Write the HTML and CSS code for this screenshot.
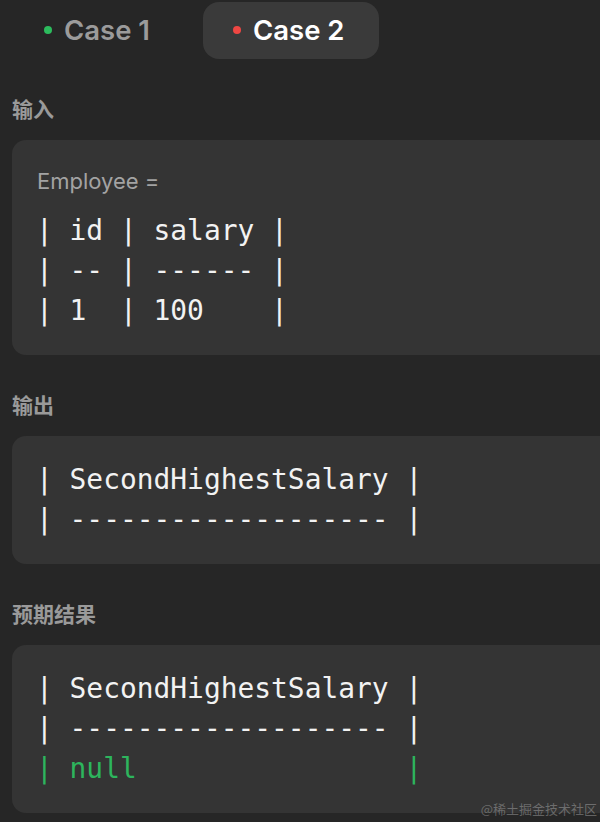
FILE: index.html
```html
<!DOCTYPE html>
<html lang="zh">
<head>
<meta charset="utf-8">
<link rel="stylesheet" href="styles.css">
</head>
<body>
<div class="page">
  <div class="tabs">
    <div class="tab"><span class="dot dot-green"></span><span class="tab-text">Case 1</span></div>
    <div class="tab tab-active"><span class="dot dot-red"></span><span class="tab-text">Case 2</span></div>
  </div>

  <div class="label">输入</div>
  <div class="box">
    <div class="var">Employee =</div>
    <pre class="code">| id | salary |
| -- | ------ |
| 1  | 100    |</pre>
  </div>

  <div class="label">输出</div>
  <div class="box">
    <pre class="code">| SecondHighestSalary |
| ------------------- |</pre>
  </div>

  <div class="label">预期结果</div>
  <div class="box">
    <pre class="code">| SecondHighestSalary |
| ------------------- |
<span class="green">| null                |</span></pre>
  </div>
</div>
<div class="watermark">@稀土掘金技术社区</div>
</body>
</html>
```

FILE: styles.css
```css
html, body {
  margin: 0;
  padding: 0;
  overflow: hidden;
  background: #262626;
  height: 822px;
}
body {
  position: relative;
  font-family: Inter, "Noto Sans", "Noto Sans CJK SC", sans-serif;
}
.page {
  width: 720px;
  padding-left: 12px;
  padding-top: 2px;
}
.tabs {
  display: flex;
  gap: 17px;
  height: 57px;
}
.tab {
  display: flex;
  align-items: center;
  gap: 12px;
  padding: 0 34px 1px 32px;
  border-radius: 16px;
  color: #9b9b9b;
  font-size: 27.5px;
  font-weight: 600;
  width: 176px;
  box-sizing: border-box;
}
.tab:first-child {
  width: 174px;
}
.tab-active {
  background: #3a3a3a;
  color: #ffffff;
  padding-left: 30px;
}
.dot {
  width: 8px;
  height: 8px;
  border-radius: 50%;
  flex: none;
}
.dot-green { background: #2cbb5d; }
.dot-red { background: #ef4743; }

.label {
  margin-top: 35px;
  height: 30px;
  line-height: 28px;
  font-size: 21px;
  font-weight: 700;
  color: #9a9a9a;
  font-family: "Noto Sans CJK SC", sans-serif;
}
.box {
  margin-top: 16px;
  background: #343434;
  border-radius: 14px;
  padding: 24px 0 24px 24px;
}
.var {
  padding-left: 1px;
  padding-top: 2px;
  height: 30px;
  line-height: 30px;
  font-size: 22px;
  color: #a3a3a3;
  margin-bottom: 15px;
}
.code {
  margin: 0;
  font-family: "DejaVu Sans Mono", "Liberation Mono", monospace;
  font-size: 27.9px;
  line-height: 40px;
  color: #f2f2f2;
  white-space: pre;
}
.green { color: #2db55d; }
.watermark {
  position: absolute;
  right: 3px;
  top: 800px;
  font-size: 13px;
  line-height: 18px;
  color: rgba(255, 255, 255, 0.28);
  font-family: "Noto Sans CJK SC", sans-serif;
}
```
